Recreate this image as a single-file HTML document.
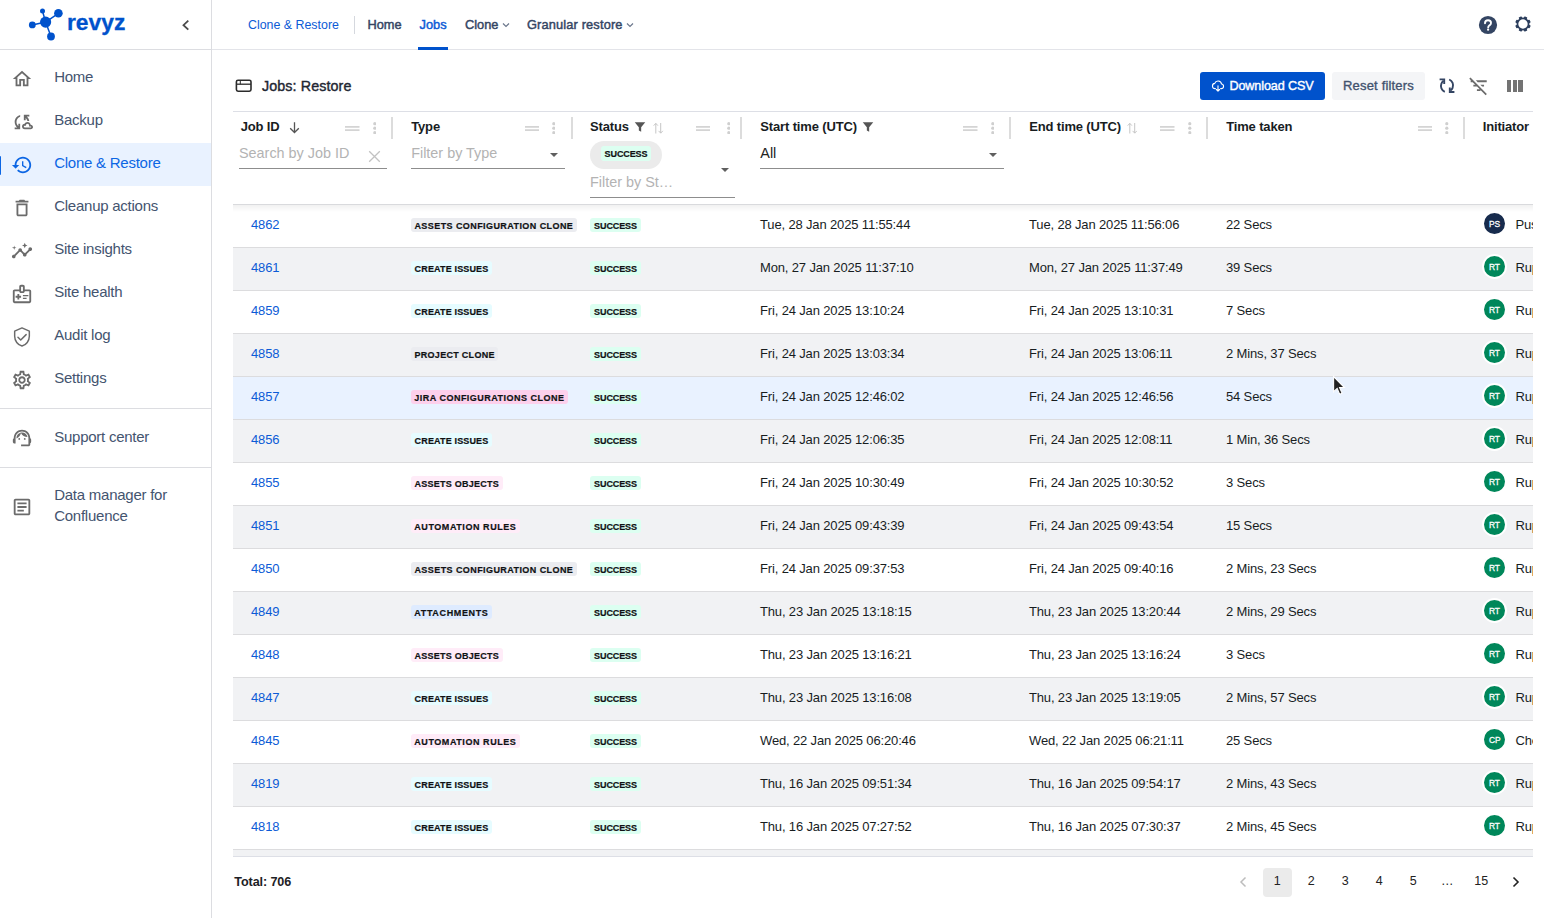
<!DOCTYPE html>
<html><head><meta charset="utf-8"><title>Jobs: Restore</title>
<style>
*{box-sizing:border-box;margin:0;padding:0}
html,body{width:1544px;height:918px;overflow:hidden;background:#fff;font-family:"Liberation Sans",sans-serif;color:#181d1f}
.abs{position:absolute}
#side{position:absolute;left:0;top:0;width:212px;height:918px;border-right:1px solid #dcdde1;background:#fff}
#shead{position:absolute;left:0;top:0;width:211px;height:50px;border-bottom:1px solid #dcdde1}
.sitem{position:absolute;left:0;width:211px;height:43px}
.sitem.sel{background:#e9f2ff}
.sitem.sel:before{content:"";position:absolute;left:-1px;top:12.500px;width:2px;height:19px;background:#0c66e4;border-radius:1px}
.sico{position:absolute;left:10.500px;width:22px;height:22px}
.slabel{position:absolute;left:54.200px;top:0;line-height:39.700px;font-size:15px;letter-spacing:-0.250px;color:#44546f;white-space:nowrap}
.sel .slabel{color:#0c66e4}
.sdiv{position:absolute;left:0;width:211px;height:1px;background:#dcdde1}
#nav{position:absolute;left:212px;top:0;width:1332px;height:50px;border-bottom:1px solid #e3e4e9}
.nv{position:absolute;top:0;line-height:50px;font-size:12.800px;color:#344563;white-space:nowrap;-webkit-text-stroke:0.450px #344563}
#main{position:absolute;left:212px;top:50px;width:1332px;height:868px}
/* table */
#tbl{position:absolute;left:233px;top:111px;width:1300px;height:746px;border-top:1px solid #dddfe6;border-bottom:1px solid #dddfe6;overflow:hidden}
#thead{position:absolute;left:0;top:0;width:1300px;height:93px;border-bottom:1px solid #dcdcdc;background:#fff;box-shadow:0 2px 5px rgba(0,0,0,.07);z-index:2}
.row{position:absolute;left:233px;width:1300px;height:43px;border-bottom:1px solid #dcdcde;background:#fff;overflow:hidden}
.row.alt{background:#f1f2f4}
.row.hov{background:#e9f2ff}
.c{position:absolute;top:0;line-height:40px;font-size:13px;letter-spacing:-0.150px;white-space:nowrap;color:#181d1f;margin-left:-233px}
.c.lnk{color:#0c5bd6}
.cb{position:absolute;top:13px;height:14px;margin-left:-233px}
.bdg{display:block;height:14px;line-height:16.600px;-webkit-text-stroke:0.200px #101214;border-radius:3px;font-size:9px;font-weight:bold;color:#101214;text-align:center;white-space:nowrap;overflow:hidden}
.gray{background:#ebecf0}.cyan{background:#e6fcff}.pink{background:#fdd0ec}.lpink{background:#ffecf8}.blue{background:#deebff}.green{background:#dcfff1}
.av{position:absolute;left:1249px;top:5.700px;width:25px;height:25px;border:2px solid #fff;border-radius:50%;color:#fff;font-size:9.800px;-webkit-text-stroke:0.300px #fff;letter-spacing:0;line-height:21.400px;text-align:center}
.av b{display:inline-block;font-weight:normal;transform:scaleX(.86)}
.hl{position:absolute;top:6px;line-height:20px;font-size:13px;letter-spacing:-0.150px;font-weight:bold;color:#181d1f;white-space:nowrap}
.heq{position:absolute;top:14.600px;width:14.500px;height:5px}
.hdots{position:absolute;top:10.800px;width:3.600px;height:12.400px;margin-left:-0.200px}
.hsep{position:absolute;top:6px;width:2px;height:22px;background:#dcdcdc}
.hfilt{position:absolute;top:9px;width:14px;height:14px}
.hsort{position:absolute;top:10.500px;width:10.500px;height:12.500px}
.fin{position:absolute;height:1px;background:#8d8d8d}
.ph{position:absolute;font-size:14.400px;line-height:20px;color:#b3b3b3;white-space:nowrap}
.dd{position:absolute;width:0;height:0;border-left:4.500px solid transparent;border-right:4.500px solid transparent;border-top:4.500px solid #5f5f5f}
.pg{position:absolute;top:868px;width:28.500px;height:28.500px;border-radius:4px;text-align:center;line-height:27px;font-size:12.500px;color:#222}
.pg.sel{background:#ebebeb}
</style></head><body>
<div id="side">
 <div id="shead">
  <svg class="abs" style="left:26px;top:6px;width:38px;height:38px" viewBox="26 6 38 38">
   <g stroke="#0052cc" stroke-width="1.500" fill="none"><path d="M45.600 22.100L58.400 13.300M45.600 22.100L32.300 24.900M45.600 22.100L51 36.500M45.600 22.100L42.500 11"/></g>
   <g fill="#0052cc"><circle cx="45.600" cy="22.100" r="5.600"/><circle cx="58.400" cy="13.300" r="4.300"/><circle cx="32.300" cy="24.900" r="3.400"/><circle cx="51" cy="36.500" r="3.900"/><circle cx="42.500" cy="11" r="2.500"/></g>
  </svg>
  <div class="abs" style="left:67px;top:7.300px;line-height:30px;font-size:22.800px;-webkit-text-stroke:0.3px #0052cc;font-weight:bold;color:#0052cc;letter-spacing:0">revyz</div>
  <svg class="abs" style="left:179px;top:17px;width:14px;height:16px" viewBox="0 0 14 16" fill="none" stroke="#4a4a4a" stroke-width="1.800"><path d="M9.300 3.700L4.500 8.200l4.800 4.500"/></svg>
 </div>
 <div class="sitem" style="top:57px"><svg class="sico" style="top:10.5px" viewBox="0 0 24 24" fill="#6b6b6b"><path d="M12 5.69l5 4.5V18h-2v-6H9v6H7v-7.81l5-4.5M12 3L2 12h3v8h6v-6h2v6h6v-8h3L12 3z"/></svg><span class="slabel">Home</span></div>
<div class="sitem" style="top:100px"><svg class="sico" style="top:10.5px" viewBox="0 0 24 24" fill="#6b6b6b"><path d="M21.5 14.98c-.02 0-.03 0-.05.01C21.2 13.3 19.76 12 18 12c-1.4 0-2.6.83-3.16 2.02C13.26 14.1 12 15.4 12 17c0 1.66 1.34 3 3 3l6.5-.02c1.38 0 2.5-1.12 2.5-2.5s-1.12-2.5-2.5-2.5zm.01 3.02H15c-.55 0-1-.45-1-1s.45-1 1-1h1.25v-.25c0-.97.78-1.75 1.75-1.75s1.75.78 1.75 1.75V17h1.76c.28 0 .5.22.5.5-.01.27-.23.5-.5.5zM10 4.26v2.09C7.67 7.18 6 9.39 6 12c0 1.77.78 3.34 2 4.44V14h2v6H4v-2h2.73C5.06 16.54 4 14.4 4 12c0-3.73 2.55-6.85 6-7.74zM20 6h-2.73c1.43 1.26 2.41 3.01 2.66 5h-2.02c-.23-1.36-.93-2.55-1.91-3.44V10h-2V4h6v2z"/></svg><span class="slabel">Backup</span></div>
<div class="sitem sel" style="top:143px"><svg class="sico" style="top:10.5px" viewBox="0 0 24 24" fill="#0c66e4"><path d="M13 3c-4.97 0-9 4.03-9 9H1l3.89 3.89.07.14L9 12H6c0-3.87 3.13-7 7-7s7 3.13 7 7-3.13 7-7 7c-1.93 0-3.68-.79-4.94-2.06l-1.42 1.42C8.27 19.99 10.51 21 13 21c4.97 0 9-4.03 9-9s-4.03-9-9-9zm-1 5v5l4.25 2.52.77-1.28-3.52-2.09V8z"/></svg><span class="slabel">Clone &amp; Restore</span></div>
<div class="sitem" style="top:186px"><svg class="sico" style="top:10.5px" viewBox="0 0 24 24" fill="#6b6b6b"><path d="M6 19c0 1.1.9 2 2 2h8c1.1 0 2-.9 2-2V7H6v12zM8 9h8v10H8V9zm7.5-5l-1-1h-5l-1 1H5v2h14V4h-3.500z"/></svg><span class="slabel">Cleanup actions</span></div>
<div class="sitem" style="top:229px"><svg class="sico" style="top:10.5px" viewBox="0 0 24 24" fill="#6b6b6b"><path d="M21 8c-1.45 0-2.26 1.44-1.93 2.51l-3.55 3.56c-.3-.09-.74-.09-1.04 0l-2.55-2.55C12.27 10.45 11.46 9 10 9c-1.45 0-2.27 1.44-1.93 2.52l-4.56 4.55C2.44 15.74 1 16.55 1 18c0 1.1.9 2 2 2 1.45 0 2.26-1.44 1.930-2.51l4.55-4.56c.3.09.74.09 1.04 0l2.55 2.55C12.73 16.55 13.54 18 15 18c1.45 0 2.27-1.44 1.93-2.52l3.560-3.55c1.07.33 2.51-.48 2.51-1.93 0-1.1-.9-2-2-2z"/><path d="M15 9l.94-2.070L18 6l-2.060-.93L15 3l-.92 2.070L12 6l2.080.93zM3.500 11L4 9l2-.5L4 8l-.5-2L3 8l-2 .5L3 9z"/></svg><span class="slabel">Site insights</span></div>
<div class="sitem" style="top:272px"><svg class="sico" style="top:10.5px" viewBox="0 0 24 24" fill="#6b6b6b"><path d="M20 7h-5V4c0-1.100-.9-2-2-2h-2c-1.100 0-2 .9-2 2v3H4c-1.100 0-2 .9-2 2v11c0 1.100.9 2 2 2h16c1.100 0 2-.9 2-2V9c0-1.100-.9-2-2-2zm-9-3h2v5h-2V4zm9 16H4V9h5c0 1.100.9 2 2 2h2c1.100 0 2-.9 2-2h5v11zm-9-4H9v2H7v-2H5v-2h2v-2h2v2h2v2zm2-1.500V13h6v1.500h-6zm0 3V16h4v1.500h-4z"/></svg><span class="slabel">Site health</span></div>
<div class="sitem" style="top:315px"><svg class="sico" style="top:10.5px" viewBox="0 0 24 24" fill="#6b6b6b"><g fill="none" stroke="#6b6b6b" stroke-width="1.600" stroke-linejoin="round"><path d="M12 2.100L4 5.600v5.600c0 4.900 3.400 9.500 8 10.700 4.600-1.200 8-5.800 8-10.700V5.600z"/><path d="M7.600 12.300l3 3 5.900-5.900" stroke-linecap="round"/></g></svg><span class="slabel">Audit log</span></div>
<div class="sitem" style="top:358px"><svg class="sico" style="top:10.5px" viewBox="0 0 24 24" fill="#6b6b6b"><path d="M19.430 12.980c.04-.32.07-.64.07-.98 0-.34-.03-.66-.07-.98l2.110-1.650c.19-.15.24-.42.12-.64l-2-3.460c-.09-.16-.26-.25-.44-.25-.06 0-.12.010-.17.030l-2.490 1c-.52-.4-1.080-.73-1.690-.98l-.38-2.650C14.460 2.180 14.250 2 14 2h-4c-.25 0-.46.18-.49.42l-.38 2.650c-.61.25-1.170.59-1.690.98l-2.490-1c-.06-.02-.12-.03-.18-.03-.17 0-.34.09-.43.25l-2 3.460c-.13.22-.07.49.12.64l2.110 1.650c-.04.32-.07.65-.07.980 0 .33.030.66.070.98l-2.110 1.650c-.19.15-.24.42-.12.64l2 3.460c.09.16.26.25.44.25.06 0 .12-.01.17-.03l2.490-1c.52.4 1.080.73 1.690.98l.38 2.650c.03.24.24.42.49.42h4c.25 0 .46-.18.49-.42l.38-2.650c.61-.25 1.170-.59 1.690-.98l2.490 1c.06.02.12.03.18.03.17 0 .34-.09.43-.25l2-3.460c.12-.22.07-.49-.12-.64l-2.110-1.650zm-1.980-1.710c.04.31.05.52.05.73 0 .21-.02.43-.05.73l-.14 1.130.89.7 1.080.84-.7 1.210-1.270-.51-1.040-.42-.9.68c-.43.32-.84.56-1.250.73l-1.060.43-.16 1.130-.2 1.350h-1.400l-.19-1.350-.16-1.130-1.060-.43c-.43-.18-.83-.41-1.230-.71l-.91-.7-1.060.43-1.270.51-.7-1.210 1.080-.84.89-.7-.14-1.130c-.03-.31-.05-.54-.05-.74s.02-.43.05-.73l.14-1.130-.89-.7-1.080-.84.7-1.210 1.270.51 1.040.42.9-.68c.43-.32.84-.56 1.250-.73l1.060-.43.16-1.130.2-1.350h1.390l.19 1.350.16 1.130 1.060.43c.43.18.83.41 1.230.71l.91.7 1.060-.43 1.270-.51.7 1.210-1.070.85-.89.7.14 1.130zM12 8c-2.210 0-4 1.790-4 4s1.790 4 4 4 4-1.790 4-4-1.790-4-4-4zm0 6c-1.100 0-2-.9-2-2s.9-2 2-2 2 .9 2 2-.9 2-2 2z"/></svg><span class="slabel">Settings</span></div>

 <div class="sdiv" style="top:408px"></div>
 <div class="sitem" style="top:416.500px"><svg class="sico" style="top:10.5px" viewBox="0 0 24 24" fill="#6b6b6b"><path d="M21 12.220C21 6.730 16.740 3 12 3c-4.690 0-9 3.650-9 9.280-.6.34-1 .98-1 1.720v2c0 1.100.9 2 2 2h1v-6.100c0-3.870 3.130-7 7-7s7 3.130 7 7V19h-8v2h8c1.100 0 2-.9 2-2v-1.220c.59-.31 1-.92 1-1.640v-2.300c0-.7-.41-1.310-1-1.620z"/><circle cx="9" cy="13" r="1"/><circle cx="15" cy="13" r="1"/><path d="M18 11.030C17.520 8.180 15.040 6 12.050 6c-3.030 0-6.290 2.510-6.030 6.450 2.470-1.010 4.330-3.210 4.860-5.890 1.310 2.630 4 4.440 7.120 4.470z"/></svg><span class="slabel">Support center</span></div>
 <div class="sdiv" style="top:467px"></div>
 <div class="sitem" style="top:475.500px;height:63px"><svg class="sico" style="top:20.5px" viewBox="0 0 24 24" fill="#6b6b6b"><path d="M19 5v14H5V5h14m0-2H5c-1.100 0-2 .9-2 2v14c0 1.100.9 2 2 2h14c1.100 0 2-.9 2-2V5c0-1.100-.9-2-2-2z"/><path d="M14 17H7v-2h7v2zm3-4H7v-2h10v2zm0-4H7V7h10v2z"/></svg><span class="slabel" style="line-height:21px;top:8.400px">Data manager for<br>Confluence</span></div>
</div>

<div id="nav">
 <span class="nv" style="left:36px;font-size:12.400px;-webkit-text-stroke:0;color:#0c5bd6" id="n1">Clone &amp; Restore</span>
 <div class="abs" style="left:142px;top:16px;width:1px;height:18px;background:#d5d8de"></div>
 <span class="nv" style="left:155.400px" id="n2">Home</span>
 <span class="nv" style="left:207.600px;color:#0c5bd6;-webkit-text-stroke-color:#0c5bd6" id="n3">Jobs</span>
 <div class="abs" style="left:206px;top:47px;width:30px;height:3px;background:#0052cc"></div>
 <span class="nv" style="left:253px" id="n4">Clone</span>
 <svg class="abs" style="left:290px;top:21px;width:8px;height:8px" viewBox="0 0 8 8" fill="none" stroke="#6b778c" stroke-width="1.200"><path d="M1 2.500l3 3 3-3"/></svg>
 <span class="nv" style="left:315px;letter-spacing:0.150px" id="n5">Granular restore</span>
 <svg class="abs" style="left:414px;top:21px;width:8px;height:8px" viewBox="0 0 8 8" fill="none" stroke="#6b778c" stroke-width="1.200"><path d="M1 2.500l3 3 3-3"/></svg>
 <!-- help -->
 <svg class="abs" style="left:1265.800px;top:14.700px;width:20px;height:20px" viewBox="0 0 20 20"><circle cx="10" cy="10" r="9.100" fill="#344563"/><path d="M7 8.200c0-1.800 1.300-3 3-3s3 1.100 3 2.700c0 1.500-1 2.100-1.700 2.600-.7.500-1.100.9-1.100 1.900" fill="none" stroke="#fff" stroke-width="1.900" stroke-linecap="round"/><circle cx="10.100" cy="14.700" r="1.150" fill="#fff"/></svg>
 <!-- gear -->
 <svg class="abs" style="left:1301.100px;top:14px;width:20px;height:20px" viewBox="0 0 20 20"><g fill="#2c3e5d"><path fill-rule="evenodd" d="M10 3.600a6.400 6.400 0 1 0 0 12.800a6.400 6.400 0 1 0 0-12.800zM10 5.300a4.700 4.700 0 1 1 0 9.400a4.700 4.700 0 1 1 0-9.400z"/><rect x="8.400" y="2.250" width="3.200" height="2.600" rx=".7" transform="rotate(22.5 10 10)"/><rect x="8.400" y="2.250" width="3.200" height="2.600" rx=".7" transform="rotate(67.5 10 10)"/><rect x="8.400" y="2.250" width="3.200" height="2.600" rx=".7" transform="rotate(112.5 10 10)"/><rect x="8.400" y="2.250" width="3.200" height="2.600" rx=".7" transform="rotate(157.5 10 10)"/><rect x="8.400" y="2.250" width="3.200" height="2.600" rx=".7" transform="rotate(202.5 10 10)"/><rect x="8.400" y="2.250" width="3.200" height="2.600" rx=".7" transform="rotate(247.5 10 10)"/><rect x="8.400" y="2.250" width="3.200" height="2.600" rx=".7" transform="rotate(292.5 10 10)"/><rect x="8.400" y="2.250" width="3.200" height="2.600" rx=".7" transform="rotate(337.5 10 10)"/></g></svg>
</div>

<!-- title -->
<svg class="abs" style="left:235px;top:79px;width:18px;height:14px" viewBox="235 79 18 14" fill="none" stroke="#2b2b2b"><rect x="236.400" y="80.200" width="14.600" height="11" rx="1.600" stroke-width="1.600"/><path d="M236.400 84.200h14.600" stroke-width="1.300"/><path d="M240.300 80.200v4" stroke-width="1"/></svg>
<div class="abs" id="title" style="left:262px;top:76px;line-height:20px;font-size:14.300px;letter-spacing:0.1px;-webkit-text-stroke:0.4px #1f2733;color:#1f2733;white-space:nowrap">Jobs: Restore</div>

<!-- toolbar -->
<div class="abs" style="left:1200px;top:72px;width:125px;height:28px;border-radius:3px;background:#0052cc"></div>
<svg class="abs" style="left:1210.900px;top:79.100px;width:14px;height:14px" viewBox="0 0 24 24" fill="none" stroke="#fff" stroke-width="1.900" stroke-linecap="round" stroke-linejoin="round"><path d="M7.500 16.500H7a4.500 4.500 0 0 1-.6-8.960A6 6 0 0 1 18 8.500a4 4 0 0 1-.5 7.970H16.500"/><path d="M12 11.500v9M9.300 18l2.700 2.700 2.700-2.700"/></svg>
<div class="abs" id="dl" style="left:1229.400px;top:72px;line-height:28.500px;font-size:12.600px;letter-spacing:-0.100px;-webkit-text-stroke:0.400px #fff;color:#fff;white-space:nowrap">Download CSV</div>
<div class="abs" style="left:1332px;top:72px;width:93px;height:28px;border-radius:3px;background:#f4f5f7"></div>
<div class="abs" id="rf" style="left:1343px;top:72px;line-height:28.500px;font-size:13px;letter-spacing:0.180px;-webkit-text-stroke:0.350px #42526e;color:#42526e;white-space:nowrap">Reset filters</div>
<!-- refresh -->
<svg class="abs" style="left:1437px;top:76px;width:20px;height:20px" viewBox="0 0 20 20" fill="none" stroke="#344563" stroke-width="1.900"><path d="M7.800 15.900C4.600 14.500 3.100 10.800 4.400 7.600 4.800 6.600 5.500 5.600 6.500 4.800"/><path d="M2.600 3.400h4.600v4.600" stroke-linejoin="miter"/><path d="M12.200 3.500c3.200 1.400 4.700 5.100 3.400 8.300-.4 1-1.100 2-2.100 2.800"/><path d="M17.400 16h-4.600v-4.600"/></svg>
<!-- filter off -->
<svg class="abs" style="left:1468px;top:75px;width:21.400px;height:21.400px" viewBox="0 0 24 24" fill="#6b6b6b"><path d="M10.830 8H21V6H8.830l2 2zm5 5H18v-2h-4.170l2 2zM14 16.830V18h-4v-2h3.170l-3-3H6v-2h2.170l-3-3H3V6h.17L1.390 4.220 2.800 2.810l18.380 18.380-1.410 1.410L14 16.830z"/></svg>
<!-- columns -->
<div class="abs" style="left:1507px;top:79.500px;width:4.300px;height:12.300px;background:#737373"></div>
<div class="abs" style="left:1512.700px;top:79.500px;width:4.300px;height:12.300px;background:#737373"></div>
<div class="abs" style="left:1518.400px;top:79.500px;width:4.400px;height:12.300px;background:#737373"></div>

<!-- rows -->
<div class="row" style="top:205px"><span class="c lnk" style="left:251px">4862</span><span class="cb" style="left:411px"><span class="bdg gray" style="width:165.7px;letter-spacing:0.422px">ASSETS CONFIGURATION CLONE</span></span><span class="cb" style="left:590px"><span class="bdg green" style="width:51px;letter-spacing:-0.103px">SUCCESS</span></span><span class="c" style="left:760px">Tue, 28 Jan 2025 11:55:44</span><span class="c" style="left:1029px">Tue, 28 Jan 2025 11:56:06</span><span class="c" style="left:1226px">22 Secs</span><span class="av" style="background:#172b4d"><b>PS</b></span><span class="c nm" style="left:1515.500px">Pus</span></div>
<div class="row alt" style="top:248px"><span class="c lnk" style="left:251px">4861</span><span class="cb" style="left:411px"><span class="bdg cyan" style="width:81px;letter-spacing:0.153px">CREATE ISSUES</span></span><span class="cb" style="left:590px"><span class="bdg green" style="width:51px;letter-spacing:-0.103px">SUCCESS</span></span><span class="c" style="left:760px">Mon, 27 Jan 2025 11:37:10</span><span class="c" style="left:1029px">Mon, 27 Jan 2025 11:37:49</span><span class="c" style="left:1226px">39 Secs</span><span class="av" style="background:#00875a"><b>RT</b></span><span class="c nm" style="left:1515.500px">Rup</span></div>
<div class="row" style="top:291px"><span class="c lnk" style="left:251px">4859</span><span class="cb" style="left:411px"><span class="bdg cyan" style="width:81px;letter-spacing:0.153px">CREATE ISSUES</span></span><span class="cb" style="left:590px"><span class="bdg green" style="width:51px;letter-spacing:-0.103px">SUCCESS</span></span><span class="c" style="left:760px">Fri, 24 Jan 2025 13:10:24</span><span class="c" style="left:1029px">Fri, 24 Jan 2025 13:10:31</span><span class="c" style="left:1226px">7 Secs</span><span class="av" style="background:#00875a"><b>RT</b></span><span class="c nm" style="left:1515.500px">Rup</span></div>
<div class="row alt" style="top:334px"><span class="c lnk" style="left:251px">4858</span><span class="cb" style="left:411px"><span class="bdg gray" style="width:87.3px;letter-spacing:0.29px">PROJECT CLONE</span></span><span class="cb" style="left:590px"><span class="bdg green" style="width:51px;letter-spacing:-0.103px">SUCCESS</span></span><span class="c" style="left:760px">Fri, 24 Jan 2025 13:03:34</span><span class="c" style="left:1029px">Fri, 24 Jan 2025 13:06:11</span><span class="c" style="left:1226px">2 Mins, 37 Secs</span><span class="av" style="background:#00875a"><b>RT</b></span><span class="c nm" style="left:1515.500px">Rup</span></div>
<div class="row hov" style="top:377px"><span class="c lnk" style="left:251px">4857</span><span class="cb" style="left:411px"><span class="bdg pink" style="width:156.8px;letter-spacing:0.483px">JIRA CONFIGURATIONS CLONE</span></span><span class="cb" style="left:590px"><span class="bdg green" style="width:51px;letter-spacing:-0.103px">SUCCESS</span></span><span class="c" style="left:760px">Fri, 24 Jan 2025 12:46:02</span><span class="c" style="left:1029px">Fri, 24 Jan 2025 12:46:56</span><span class="c" style="left:1226px">54 Secs</span><span class="av" style="background:#00875a"><b>RT</b></span><span class="c nm" style="left:1515.500px">Rup</span></div>
<div class="row alt" style="top:420px"><span class="c lnk" style="left:251px">4856</span><span class="cb" style="left:411px"><span class="bdg cyan" style="width:81px;letter-spacing:0.153px">CREATE ISSUES</span></span><span class="cb" style="left:590px"><span class="bdg green" style="width:51px;letter-spacing:-0.103px">SUCCESS</span></span><span class="c" style="left:760px">Fri, 24 Jan 2025 12:06:35</span><span class="c" style="left:1029px">Fri, 24 Jan 2025 12:08:11</span><span class="c" style="left:1226px">1 Min, 36 Secs</span><span class="av" style="background:#00875a"><b>RT</b></span><span class="c nm" style="left:1515.500px">Rup</span></div>
<div class="row" style="top:463px"><span class="c lnk" style="left:251px">4855</span><span class="cb" style="left:411px"><span class="bdg lpink" style="width:91.6px;letter-spacing:0.259px">ASSETS OBJECTS</span></span><span class="cb" style="left:590px"><span class="bdg green" style="width:51px;letter-spacing:-0.103px">SUCCESS</span></span><span class="c" style="left:760px">Fri, 24 Jan 2025 10:30:49</span><span class="c" style="left:1029px">Fri, 24 Jan 2025 10:30:52</span><span class="c" style="left:1226px">3 Secs</span><span class="av" style="background:#00875a"><b>RT</b></span><span class="c nm" style="left:1515.500px">Rup</span></div>
<div class="row alt" style="top:506px"><span class="c lnk" style="left:251px">4851</span><span class="cb" style="left:411px"><span class="bdg lpink" style="width:108.7px;letter-spacing:0.555px">AUTOMATION RULES</span></span><span class="cb" style="left:590px"><span class="bdg green" style="width:51px;letter-spacing:-0.103px">SUCCESS</span></span><span class="c" style="left:760px">Fri, 24 Jan 2025 09:43:39</span><span class="c" style="left:1029px">Fri, 24 Jan 2025 09:43:54</span><span class="c" style="left:1226px">15 Secs</span><span class="av" style="background:#00875a"><b>RT</b></span><span class="c nm" style="left:1515.500px">Rup</span></div>
<div class="row" style="top:549px"><span class="c lnk" style="left:251px">4850</span><span class="cb" style="left:411px"><span class="bdg gray" style="width:165.7px;letter-spacing:0.422px">ASSETS CONFIGURATION CLONE</span></span><span class="cb" style="left:590px"><span class="bdg green" style="width:51px;letter-spacing:-0.103px">SUCCESS</span></span><span class="c" style="left:760px">Fri, 24 Jan 2025 09:37:53</span><span class="c" style="left:1029px">Fri, 24 Jan 2025 09:40:16</span><span class="c" style="left:1226px">2 Mins, 23 Secs</span><span class="av" style="background:#00875a"><b>RT</b></span><span class="c nm" style="left:1515.500px">Rup</span></div>
<div class="row alt" style="top:592px"><span class="c lnk" style="left:251px">4849</span><span class="cb" style="left:411px"><span class="bdg blue" style="width:80.8px;letter-spacing:0.643px">ATTACHMENTS</span></span><span class="cb" style="left:590px"><span class="bdg green" style="width:51px;letter-spacing:-0.103px">SUCCESS</span></span><span class="c" style="left:760px">Thu, 23 Jan 2025 13:18:15</span><span class="c" style="left:1029px">Thu, 23 Jan 2025 13:20:44</span><span class="c" style="left:1226px">2 Mins, 29 Secs</span><span class="av" style="background:#00875a"><b>RT</b></span><span class="c nm" style="left:1515.500px">Rup</span></div>
<div class="row" style="top:635px"><span class="c lnk" style="left:251px">4848</span><span class="cb" style="left:411px"><span class="bdg lpink" style="width:91.6px;letter-spacing:0.259px">ASSETS OBJECTS</span></span><span class="cb" style="left:590px"><span class="bdg green" style="width:51px;letter-spacing:-0.103px">SUCCESS</span></span><span class="c" style="left:760px">Thu, 23 Jan 2025 13:16:21</span><span class="c" style="left:1029px">Thu, 23 Jan 2025 13:16:24</span><span class="c" style="left:1226px">3 Secs</span><span class="av" style="background:#00875a"><b>RT</b></span><span class="c nm" style="left:1515.500px">Rup</span></div>
<div class="row alt" style="top:678px"><span class="c lnk" style="left:251px">4847</span><span class="cb" style="left:411px"><span class="bdg cyan" style="width:81px;letter-spacing:0.153px">CREATE ISSUES</span></span><span class="cb" style="left:590px"><span class="bdg green" style="width:51px;letter-spacing:-0.103px">SUCCESS</span></span><span class="c" style="left:760px">Thu, 23 Jan 2025 13:16:08</span><span class="c" style="left:1029px">Thu, 23 Jan 2025 13:19:05</span><span class="c" style="left:1226px">2 Mins, 57 Secs</span><span class="av" style="background:#00875a"><b>RT</b></span><span class="c nm" style="left:1515.500px">Rup</span></div>
<div class="row" style="top:721px"><span class="c lnk" style="left:251px">4845</span><span class="cb" style="left:411px"><span class="bdg lpink" style="width:108.7px;letter-spacing:0.555px">AUTOMATION RULES</span></span><span class="cb" style="left:590px"><span class="bdg green" style="width:51px;letter-spacing:-0.103px">SUCCESS</span></span><span class="c" style="left:760px">Wed, 22 Jan 2025 06:20:46</span><span class="c" style="left:1029px">Wed, 22 Jan 2025 06:21:11</span><span class="c" style="left:1226px">25 Secs</span><span class="av" style="background:#00875a"><b>CP</b></span><span class="c nm" style="left:1515.500px">Che</span></div>
<div class="row alt" style="top:764px"><span class="c lnk" style="left:251px">4819</span><span class="cb" style="left:411px"><span class="bdg cyan" style="width:81px;letter-spacing:0.153px">CREATE ISSUES</span></span><span class="cb" style="left:590px"><span class="bdg green" style="width:51px;letter-spacing:-0.103px">SUCCESS</span></span><span class="c" style="left:760px">Thu, 16 Jan 2025 09:51:34</span><span class="c" style="left:1029px">Thu, 16 Jan 2025 09:54:17</span><span class="c" style="left:1226px">2 Mins, 43 Secs</span><span class="av" style="background:#00875a"><b>RT</b></span><span class="c nm" style="left:1515.500px">Rup</span></div>
<div class="row" style="top:807px"><span class="c lnk" style="left:251px">4818</span><span class="cb" style="left:411px"><span class="bdg cyan" style="width:81px;letter-spacing:0.153px">CREATE ISSUES</span></span><span class="cb" style="left:590px"><span class="bdg green" style="width:51px;letter-spacing:-0.103px">SUCCESS</span></span><span class="c" style="left:760px">Thu, 16 Jan 2025 07:27:52</span><span class="c" style="left:1029px">Thu, 16 Jan 2025 07:30:37</span><span class="c" style="left:1226px">2 Mins, 45 Secs</span><span class="av" style="background:#00875a"><b>RT</b></span><span class="c nm" style="left:1515.500px">Rup</span></div>

<div class="row alt" style="top:850px;height:7px;border-bottom:1px solid #dddfe6"></div>

<!-- table header -->
<div class="abs" style="left:233px;top:111px;width:1300px;height:94px;border-top:1px solid #dddfe6;border-bottom:1px solid #d9dadd;background:#fff">
 <div style="position:absolute;left:0;top:93px;width:1300px;height:7px;background:linear-gradient(rgba(0,0,0,.055),rgba(0,0,0,0))"></div>
 <div style="position:absolute;left:-233px;top:-1px;width:1544px;height:94px">
  <span class="hl" style="left:240.700px">Job ID</span>
  <svg class="abs" style="left:288.300px;top:9.900px;width:13px;height:13px" viewBox="0 0 13 13" fill="none" stroke="#555" stroke-width="1.300"><path d="M6.500 1.200v10M2.200 7.200l4.300 4.300 4.300-4.300"/></svg>
  <svg class="heq" style="left:345.4px" viewBox="0 0 14.500 5"><path d="M0 .85h14.500M0 4.150h14.500" stroke="#d4d4d4" stroke-width="1.700" fill="none"/></svg><svg class="hdots" style="left:372.9px" viewBox="0 0 3.600 12.400" fill="#cfcfcf"><circle cx="1.800" cy="1.700" r="1.600"/><circle cx="1.800" cy="6.200" r="1.600"/><circle cx="1.800" cy="10.700" r="1.600"/></svg><div class="hsep" style="left:391px"></div>
  <span class="hl" style="left:411.200px">Type</span>
  <svg class="heq" style="left:524.7px" viewBox="0 0 14.500 5"><path d="M0 .85h14.500M0 4.150h14.500" stroke="#d4d4d4" stroke-width="1.700" fill="none"/></svg><svg class="hdots" style="left:551.8px" viewBox="0 0 3.600 12.400" fill="#cfcfcf"><circle cx="1.800" cy="1.700" r="1.600"/><circle cx="1.800" cy="6.200" r="1.600"/><circle cx="1.800" cy="10.700" r="1.600"/></svg><div class="hsep" style="left:570.5px"></div>
  <span class="hl" style="left:590px">Status</span><svg class="hfilt" style="left:632.6px" viewBox="0 0 24 24"><path fill="#555" d="M3 4h18l-7 8.5V20l-4-2v-5.500z"/></svg><svg class="hsort" style="left:653px" viewBox="0 0 12 14" fill="none" stroke="#c4c4c4" stroke-width="1.1"><path d="M3.200 13V1.500M0.800 4L3.200 1.400 5.600 4M8.800 1v11.500M6.400 10l2.400 2.600L11.200 10"/></svg>
  <svg class="heq" style="left:695.6px" viewBox="0 0 14.500 5"><path d="M0 .85h14.500M0 4.150h14.500" stroke="#d4d4d4" stroke-width="1.700" fill="none"/></svg><svg class="hdots" style="left:727px" viewBox="0 0 3.600 12.400" fill="#cfcfcf"><circle cx="1.800" cy="1.700" r="1.600"/><circle cx="1.800" cy="6.200" r="1.600"/><circle cx="1.800" cy="10.700" r="1.600"/></svg><div class="hsep" style="left:740.2px"></div>
  <span class="hl" style="left:760.300px">Start time (UTC)</span><svg class="hfilt" style="left:861px" viewBox="0 0 24 24"><path fill="#555" d="M3 4h18l-7 8.5V20l-4-2v-5.500z"/></svg>
  <svg class="heq" style="left:963.4px" viewBox="0 0 14.500 5"><path d="M0 .85h14.500M0 4.150h14.500" stroke="#d4d4d4" stroke-width="1.700" fill="none"/></svg><svg class="hdots" style="left:991px" viewBox="0 0 3.600 12.400" fill="#cfcfcf"><circle cx="1.800" cy="1.700" r="1.600"/><circle cx="1.800" cy="6.200" r="1.600"/><circle cx="1.800" cy="10.700" r="1.600"/></svg><div class="hsep" style="left:1009px"></div>
  <span class="hl" style="left:1029.200px">End time (UTC)</span><svg class="hsort" style="left:1126.8px" viewBox="0 0 12 14" fill="none" stroke="#c4c4c4" stroke-width="1.1"><path d="M3.200 13V1.500M0.800 4L3.200 1.400 5.600 4M8.800 1v11.500M6.400 10l2.400 2.600L11.200 10"/></svg>
  <svg class="heq" style="left:1160.3px" viewBox="0 0 14.500 5"><path d="M0 .85h14.500M0 4.150h14.500" stroke="#d4d4d4" stroke-width="1.700" fill="none"/></svg><svg class="hdots" style="left:1188.2px" viewBox="0 0 3.600 12.400" fill="#cfcfcf"><circle cx="1.800" cy="1.700" r="1.600"/><circle cx="1.800" cy="6.200" r="1.600"/><circle cx="1.800" cy="10.700" r="1.600"/></svg><div class="hsep" style="left:1206.2px"></div>
  <span class="hl" style="left:1226.200px">Time taken</span>
  <svg class="heq" style="left:1417.5px" viewBox="0 0 14.500 5"><path d="M0 .85h14.500M0 4.150h14.500" stroke="#d4d4d4" stroke-width="1.700" fill="none"/></svg><svg class="hdots" style="left:1445.3px" viewBox="0 0 3.600 12.400" fill="#cfcfcf"><circle cx="1.800" cy="1.700" r="1.600"/><circle cx="1.800" cy="6.200" r="1.600"/><circle cx="1.800" cy="10.700" r="1.600"/></svg><div class="hsep" style="left:1463px"></div>
  <span class="hl" style="left:1482.700px">Initiator</span>
  <!-- filters -->
  <span class="ph" style="left:239px;top:31.800px">Search by Job ID</span>
  <svg class="abs" style="left:368px;top:39px;width:13px;height:13px" viewBox="0 0 13 13" fill="none" stroke="#c2c2c2" stroke-width="1.300"><path d="M1.200 1.200l10.600 10.600M11.800 1.200L1.200 11.800"/></svg>
  <div class="fin" style="left:239px;top:57px;width:148px"></div>
  <span class="ph" style="left:411.200px;top:31.800px">Filter by Type</span>
  <div class="dd" style="left:549.900px;top:42px"></div>
  <div class="fin" style="left:411px;top:57px;width:154px"></div>
  <div class="abs" style="left:590px;top:30px;width:72px;height:28px;border-radius:14px;background:#ebebeb"></div>
  <span class="abs bdg green" style="left:601px;top:35.300px;width:50px;height:14.700px;line-height:16.800px;letter-spacing:-0.100px">SUCCESS</span>
  <span class="ph" style="left:590px;top:60.800px">Filter by St…</span>
  <div class="dd" style="left:720.500px;top:57px"></div>
  <div class="fin" style="left:590px;top:86px;width:145px"></div>
  <span class="ph" style="left:760.300px;top:31.800px;color:#222">All</span>
  <div class="dd" style="left:988.800px;top:42px"></div>
  <div class="fin" style="left:760px;top:57px;width:244px"></div>
 </div>
</div>

<!-- footer -->
<div class="abs" id="total" style="left:234.300px;top:871.700px;line-height:20px;font-size:12.600px;letter-spacing:-0.1px;font-weight:bold;color:#1d2125;white-space:nowrap">Total: 706</div>
<svg class="abs" style="left:1238px;top:876px;width:10px;height:12px" viewBox="0 0 10 12" fill="none" stroke="#bdbdbd" stroke-width="1.500"><path d="M7.500 1.500L3 6l4.500 4.500"/></svg>
<span class="pg sel" style="left:1263px">1</span><span class="pg" style="left:1297px">2</span><span class="pg" style="left:1331px">3</span><span class="pg" style="left:1365px">4</span><span class="pg" style="left:1399px">5</span><span class="pg" style="left:1433px">…</span><span class="pg" style="left:1467px">15</span>
<svg class="abs" style="left:1511px;top:876px;width:10px;height:12px" viewBox="0 0 10 12" fill="none" stroke="#222" stroke-width="1.600"><path d="M2.500 1.500L7 6l-4.500 4.500"/></svg>

<!-- cursor -->
<svg class="abs" style="left:1331.900px;top:375.300px;width:15.100px;height:21.600px" viewBox="0 0 14 20"><path d="M1.500 1.500v14l3.300-3.100 2.300 5.400 2.200-1-2.300-5.200h4.500z" fill="#222" stroke="#fff" stroke-width="1"/></svg>
</body></html>
